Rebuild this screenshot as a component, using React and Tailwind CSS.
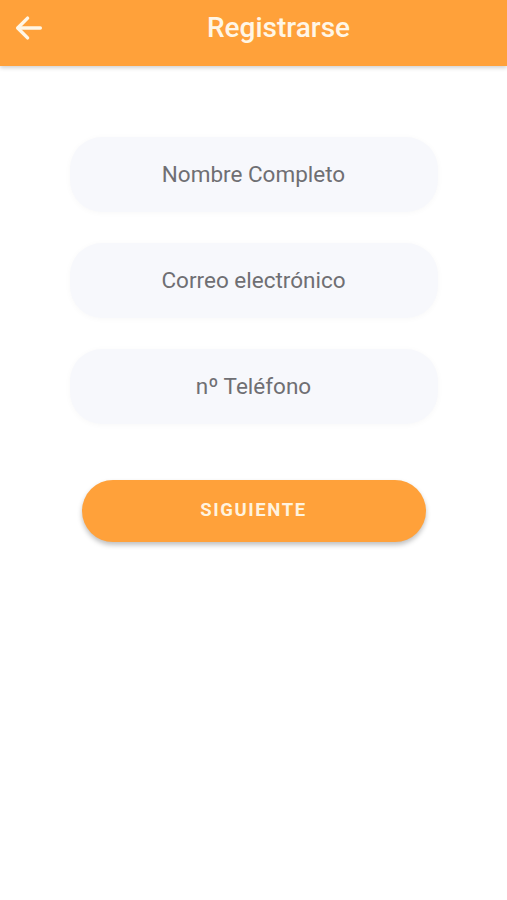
import React from "react";

const fields = ["Nombre Completo", "Correo electrónico", "nº Teléfono"];

export default function App() {
  return (
    <div className="w-[507px] h-[900px] bg-white font-['Roboto',sans-serif] flex flex-col">
      {/* Toolbar */}
      <div className="h-[66px] bg-[#ffa13a] flex items-center px-3 shadow-[0_2px_4px_rgba(0,0,0,0.18)] relative z-10">
        <svg className="-mt-[10px]" width="34" height="34" viewBox="0 0 24 24" fill="none" stroke="#fff6e6" strokeWidth="2.4" strokeLinecap="round" strokeLinejoin="round">
          <path d="M20 12H4.5" />
          <path d="M11 5l-7 7 7 7" />
        </svg>
        <h1 className="flex-1 text-center text-[28px] font-medium text-[#fff6e6] pl-[50px] -mt-[10px]">
          Registrarse
        </h1>
        <div className="w-[34px]" />
      </div>

      {/* Form */}
      <div className="flex flex-col items-center pt-[71px]">
        <div className="flex flex-col gap-[31px] w-[368px]">
          {fields.map((f) => (
            <div
              key={f}
              className="h-[75px] rounded-[32px] bg-[#f7f8fc] shadow-[0_1px_6px_rgba(0,0,0,0.03)] flex items-center justify-center text-[22.5px] text-[#6f6f73]"
            >
              {f}
            </div>
          ))}
        </div>
        <button className="mt-[56px] w-[344px] h-[62px] rounded-full bg-[#ffa13a] text-[#fff3df] text-[18.5px] font-bold tracking-[1.6px] shadow-[0_3px_5px_rgba(0,0,0,0.25)]">
          SIGUIENTE
        </button>
      </div>
    </div>
  );
}
